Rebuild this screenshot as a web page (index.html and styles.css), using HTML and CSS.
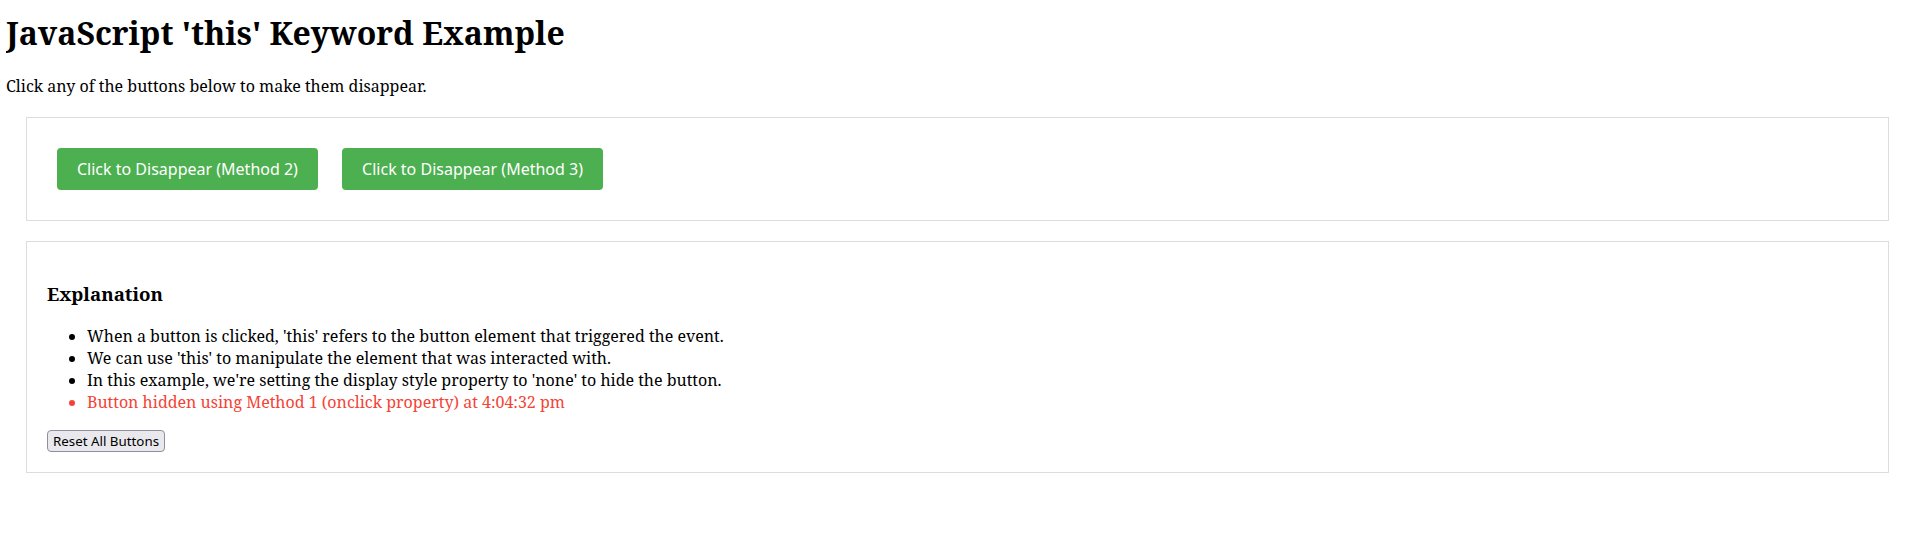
FILE: index.html
```html
<!DOCTYPE html>
<html lang="en">
<head>
<meta charset="utf-8">
<title>JavaScript 'this' Keyword Example</title>
<link rel="stylesheet" href="styles.css">
</head>
<body>
<h1 class="title">JavaScript 'this' Keyword Example</h1>
<p class="intro">Click any of the buttons below to make them disappear.</p>
<div class="panel">
  <button class="vanish-btn">Click to Disappear (Method 2)</button>
  <button class="vanish-btn">Click to Disappear (Method 3)</button>
</div>
<div class="panel">
  <h3 class="panel-heading">Explanation</h3>
  <ul class="notes">
    <li>When a button is clicked, 'this' refers to the button element that triggered the event.</li>
    <li>We can use 'this' to manipulate the element that was interacted with.</li>
    <li>In this example, we're setting the display style property to 'none' to hide the button.</li>
    <li class="log">Button hidden using Method 1 (onclick property) at 4:04:32 pm</li>
  </ul>
  <button class="reset-btn">Reset All Buttons</button>
</div>
</body>
</html>
```
FILE: styles.css
```css
body {
  margin: 0 9px 0 6px;
  font-family: "Noto Serif", "DejaVu Serif", serif;
  font-size: 16px;
  color: #000;
  background: #fff;
}
.title {
  font-size: 32px;
  font-weight: bold;
  margin: 11px 0 21.44px;
}
.intro {
  margin: 0 0 16px;
}
.panel {
  margin: 20px;
  padding: 20px;
  border: 1px solid #ddd;
}
.vanish-btn {
  margin: 10px;
  padding: 10px 20px;
  border: none;
  border-radius: 4px;
  background: #4caf50;
  color: #fff;
  font-family: "Noto Sans", "Open Sans", sans-serif;
  font-size: 16px;
  cursor: pointer;
}
.panel-heading {
  font-size: 18.72px;
  margin: 18.72px 0;
}
.notes {
  margin: 16px 0;
  padding-left: 40px;
}
.log {
  color: #f44336;
}
.reset-btn {
  font-family: "Noto Sans", "Open Sans", sans-serif;
  font-size: 13.33px;
  padding: 1px 5px;
  background: #e9e9ed;
  border: 1px solid #8f8f9d;
  border-radius: 4px;
  color: #000;
}
```
